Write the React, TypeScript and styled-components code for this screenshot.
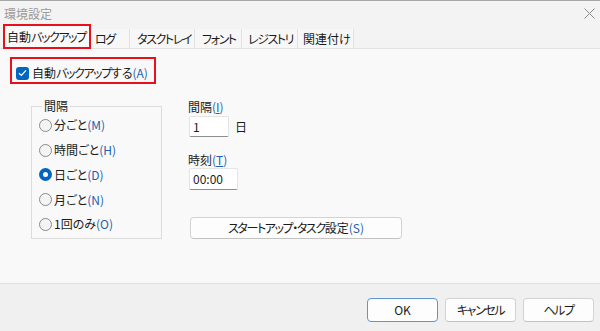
import React from "react";
import styled, { createGlobalStyle } from "styled-components";

const Global = createGlobalStyle`
  html, body { margin: 0; padding: 0; background: #f3f3f3; }
  body {
    font-family: "Noto Sans CJK JP", "Noto Sans", sans-serif;
    font-size: 12px;
    color: #1b1b1b;
    font-feature-settings: "palt";
  }
  * { box-sizing: border-box; }
`;

const Window = styled.div`
  width: 600px;
  height: 331px;
  display: flex;
  flex-direction: column;
  border-top: 1px solid #a8a8a8;
  background: #f3f3f3;
  overflow: hidden;
`;

const TitleBar = styled.div`
  height: 28px;
  display: flex;
  align-items: center;
  justify-content: space-between;
  padding: 0 5px 3px 4px;
`;

const Title = styled.span`
  color: #9a9a9a;
  font-size: 12px;
  line-height: 14px;
`;

const TabStrip = styled.div`
  height: 20px;
  display: flex;
  align-items: flex-end;
  padding-left: 3px;
  border-bottom: 1px solid #e3e3e3;
`;

const Tab = styled.div<{ $selected?: boolean; $w: number; $pl: number }>`
  width: ${(p) => p.$w}px;
  height: ${(p) => (p.$selected ? 25 : 19)}px;
  margin-bottom: ${(p) => (p.$selected ? -1 : 0)}px;
  padding-left: ${(p) => p.$pl}px;
  display: flex;
  align-items: center;
  white-space: nowrap;
  line-height: 14px;
  color: #1b1b1b;
  background: ${(p) => (p.$selected ? "#fafafa" : "#f7f7f7")};
  border: ${(p) => (p.$selected ? "2px solid #e8101a" : "none")};
  border-right: ${(p) => (p.$selected ? "2px solid #e8101a" : "1px solid #e2e2e2")};
  position: relative;
  z-index: ${(p) => (p.$selected ? 1 : 0)};
`;

const Kana = styled.span`
  letter-spacing: -1.4px;
`;

const Panel = styled.div`
  height: 235px;
  background: #f9f9f9;
  border-bottom: 1px solid #e0e0e0;
  padding: 8px 0 0 10px;
  display: flex;
  flex-direction: column;
  align-items: flex-start;
`;

const CheckRow = styled.label`
  display: flex;
  align-items: center;
  gap: 3px;
  border: 2px solid #e8101a;
  padding: 7px 6px 2px 4px;
  line-height: 14px;
  height: 27px;
`;

const CheckBox = styled.span`
  width: 13px;
  height: 13px;
  border-radius: 3px;
  background: #0067c0;
  display: inline-flex;
  align-items: center;
  justify-content: center;
`;

const Key = styled.span`
  color: #1f5fae;
`;

const Under = styled.span`
  text-decoration: underline;
  text-underline-offset: 1px;
`;

const Body = styled.div`
  display: flex;
  margin-top: 15px;
  padding-left: 21px;
  gap: 26px;
`;

const Group = styled.fieldset`
  width: 131px;
  margin: 0;
  border: 1px solid #dcdcdc;
  padding: 0 0 1px 7px;
`;

const Legend = styled.legend`
  padding: 0 2px;
  margin-left: 3px;
  line-height: 14px;
`;

const RadioRow = styled.div`
  height: 24.75px;
  display: flex;
  align-items: center;
  gap: 2px;
  line-height: 14px;
  white-space: nowrap;
`;

const RadioDot = styled.span<{ $on?: boolean }>`
  width: 13px;
  height: 13px;
  border-radius: 50%;
  flex: none;
  background: ${(p) => (p.$on ? "#0067c0" : "#f4f4f4")};
  border: ${(p) => (p.$on ? "none" : "1px solid #8a8a8a")};
  display: inline-flex;
  align-items: center;
  justify-content: center;
  &::after {
    content: "";
    display: ${(p) => (p.$on ? "block" : "none")};
    width: 5px;
    height: 5px;
    border-radius: 50%;
    background: #fff;
  }
`;

const Column = styled.div`
  display: flex;
  flex-direction: column;
  align-items: flex-start;
  padding-top: 1px;
`;

const FieldLabel = styled.div<{ $mt: number }>`
  line-height: 14px;
  margin-top: ${(p) => p.$mt}px;
`;

const InputRow = styled.div<{ $mt: number }>`
  display: flex;
  align-items: center;
  gap: 6px;
  margin-top: ${(p) => p.$mt}px;
  margin-left: 1px;
`;

const TextBox = styled.div<{ $w: number; $h: number }>`
  width: ${(p) => p.$w}px;
  height: ${(p) => p.$h}px;
  background: #ffffff;
  border: 1px solid #e4e4e4;
  border-bottom-color: #8e8e8e;
  border-radius: 2px;
  padding-left: 3px;
  display: flex;
  align-items: center;
  line-height: 14px;
`;

const PushButton = styled.button<{ $w: number; $h: number; $focus?: boolean }>`
  width: ${(p) => p.$w}px;
  height: ${(p) => p.$h}px;
  font: inherit;
  font-feature-settings: "palt";
  color: #1b1b1b;
  background: #fdfdfd;
  border: 1px solid ${(p) => (p.$focus ? "#5f95d3" : "#d3d3d3")};
  border-bottom-color: ${(p) => (p.$focus ? "#5f95d3" : "#c2c2c2")};
  border-radius: 4px;
  padding: 0;
  line-height: 14px;
  display: flex;
  align-items: center;
  justify-content: center;
  white-space: nowrap;
`;

const WideButton = styled(PushButton)`
  margin-top: 27px;
  margin-left: 2px;
`;

const Footer = styled.div`
  flex: 1;
  display: flex;
  justify-content: flex-end;
  align-items: flex-start;
  gap: 7px;
  padding: 14px 6px 0 0;
  background: #f0f0f0;
`;

const CloseIcon = () => (
  <svg width="11" height="11" viewBox="0 0 11 11">
    <path d="M0.5 0.5 L10.5 10.5 M10.5 0.5 L0.5 10.5" stroke="#8c8c8c" strokeWidth="1" />
  </svg>
);

/* Narrow katakana runs, as the UI font of the original sets them condensed */
const T = ({ children }: { children: string }) => {
  const parts = children.split(/([\u30A0-\u30FF・]+)/);
  return (
    <>
      {parts.map((s, i) =>
        i % 2 === 1 ? <Kana key={i}>{s}</Kana> : <React.Fragment key={i}>{s}</React.Fragment>
      )}
    </>
  );
};

const tabs = [
  { t: "ログ", w: 39, pl: 4 },
  { t: "タスクトレイ", w: 65, pl: 7 },
  { t: "フォント", w: 47, pl: 7 },
  { t: "レジストリ", w: 56, pl: 6 },
  { t: "関連付け", w: 56, pl: 5 },
];

const radios = [
  { t: "分ごと", k: "M" },
  { t: "時間ごと", k: "H" },
  { t: "日ごと", k: "D", on: true },
  { t: "月ごと", k: "N" },
  { t: "1回のみ", k: "O" },
];

export default function App() {
  return (
    <>
      <Global />
      <Window>
        <TitleBar>
          <Title>環境設定</Title>
          <CloseIcon />
        </TitleBar>
        <TabStrip>
          <Tab $selected $w={88} $pl={2}>
            <T>自動バックアップ</T>
          </Tab>
          {tabs.map((x) => (
            <Tab key={x.t} $w={x.w} $pl={x.pl}>
              <T>{x.t}</T>
            </Tab>
          ))}
        </TabStrip>
        <Panel>
          <CheckRow>
            <CheckBox>
              <svg width="9" height="8" viewBox="0 0 9 8">
                <path d="M1 4.2 L3.4 6.4 L8 1.4" fill="none" stroke="#fff" strokeWidth="1.3" />
              </svg>
            </CheckBox>
            <span>
              <T>自動バックアップする</T>
              <Key>(A)</Key>
            </span>
          </CheckRow>
          <Body>
            <Group>
              <Legend>間隔</Legend>
              {radios.map((r) => (
                <RadioRow key={r.k}>
                  <RadioDot $on={r.on} />
                  <span>
                    {r.t}
                    <Key>({r.k})</Key>
                  </span>
                </RadioRow>
              ))}
            </Group>
            <Column>
              <FieldLabel $mt={0}>
                間隔<Key>(<Under>I</Under>)</Key>
              </FieldLabel>
              <InputRow $mt={2}>
                <TextBox $w={40} $h={21}>1</TextBox>
                <span>日</span>
              </InputRow>
              <FieldLabel $mt={16}>
                時刻<Key>(<Under>T</Under>)</Key>
              </FieldLabel>
              <InputRow $mt={1}>
                <TextBox $w={49} $h={22}>00:00</TextBox>
              </InputRow>
              <WideButton $w={212} $h={22}>
                <T>スタートアップ・タスク設定</T>
                <Key>(S)</Key>
              </WideButton>
            </Column>
          </Body>
        </Panel>
        <Footer>
          <PushButton $w={71} $h={24} $focus>OK</PushButton>
          <PushButton $w={71} $h={24}>
            <T>キャンセル</T>
          </PushButton>
          <PushButton $w={71} $h={24}>
            <T>ヘルプ</T>
          </PushButton>
        </Footer>
      </Window>
    </>
  );
}
